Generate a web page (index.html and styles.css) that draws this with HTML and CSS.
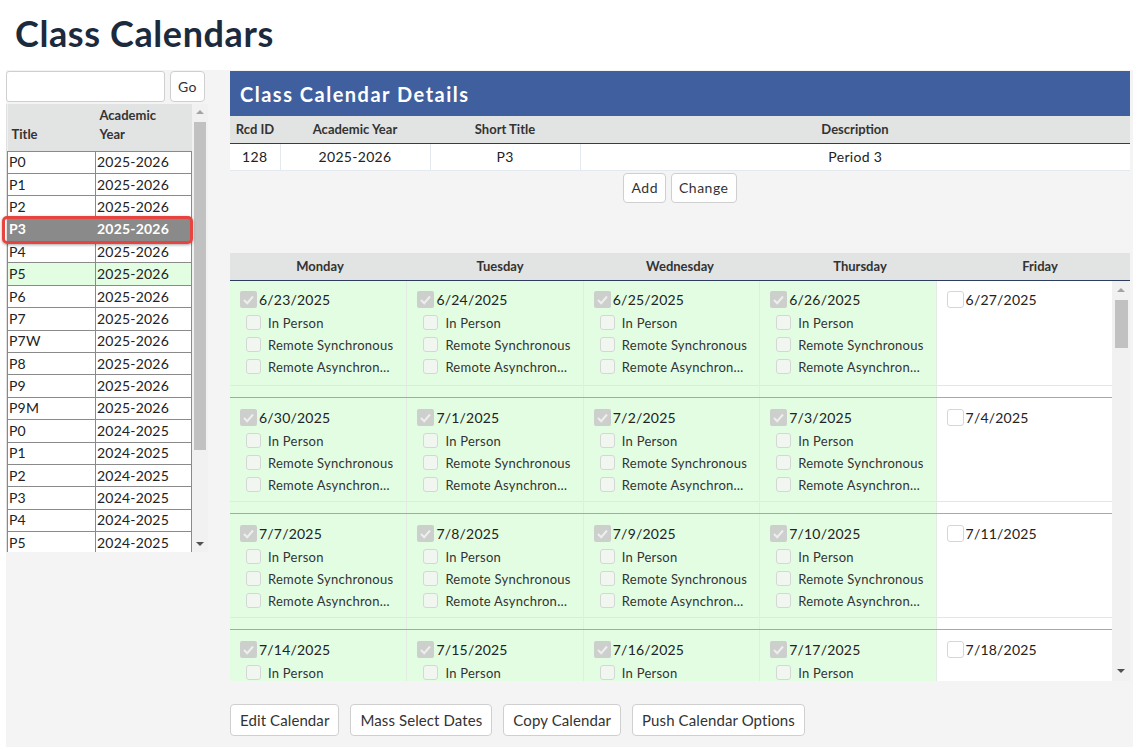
FILE: index.html
```html
<!DOCTYPE html>
<html>
<head>
<meta charset="utf-8">
<title>Class Calendars</title>
<link rel="stylesheet" href="styles.css">
</head>
<body>
<header class="page-head"><h1 class="title">Class Calendars</h1></header>
<main class="main">
  <aside class="side">
    <div class="search">
      <input class="search-input" type="text">
      <button class="btn go">Go</button>
    </div>
    <div class="list">
      <div class="list-scroll">
        <table class="list-table">
          <thead><tr><th class="c1">Title</th><th class="c2">Academic<br>Year</th></tr></thead>
          <tbody>
            <tr><td>P0</td><td>2025-2026</td></tr>
            <tr><td>P1</td><td>2025-2026</td></tr>
            <tr><td>P2</td><td>2025-2026</td></tr>
            <tr class="sel"><td>P3</td><td>2025-2026</td></tr>
            <tr><td>P4</td><td>2025-2026</td></tr>
            <tr class="hl"><td>P5</td><td>2025-2026</td></tr>
            <tr><td>P6</td><td>2025-2026</td></tr>
            <tr><td>P7</td><td>2025-2026</td></tr>
            <tr><td>P7W</td><td>2025-2026</td></tr>
            <tr><td>P8</td><td>2025-2026</td></tr>
            <tr><td>P9</td><td>2025-2026</td></tr>
            <tr><td>P9M</td><td>2025-2026</td></tr>
            <tr><td>P0</td><td>2024-2025</td></tr>
            <tr><td>P1</td><td>2024-2025</td></tr>
            <tr><td>P2</td><td>2024-2025</td></tr>
            <tr><td>P3</td><td>2024-2025</td></tr>
            <tr><td>P4</td><td>2024-2025</td></tr>
            <tr><td>P5</td><td>2024-2025</td></tr>
          </tbody>
        </table>
      </div>
      <div class="vscroll list-sb">
        <span class="sb-btn"><span class="tri up"></span></span>
        <span class="thumb"></span>
        <span class="sb-fill"></span>
        <span class="sb-btn"><span class="tri down"></span></span>
      </div>
    </div>
    <div class="annot"></div>
  </aside>

  <section class="detail">
    <div class="detail-head">Class Calendar Details</div>
    <table class="info">
      <thead>
        <tr><th class="w1">Rcd ID</th><th class="w2">Academic Year</th><th class="w3">Short Title</th><th>Description</th></tr>
      </thead>
      <tbody>
        <tr><td>128</td><td>2025-2026</td><td>P3</td><td>Period 3</td></tr>
      </tbody>
    </table>
    <div class="actions">
      <button class="btn">Add</button>
      <button class="btn">Change</button>
    </div>

    <div class="cal">
      <div class="cal-head">
        <div>Monday</div><div>Tuesday</div><div>Wednesday</div><div>Thursday</div><div>Friday</div>
      </div>
      <div class="cal-body">
        <div class="weeks">
          <div class="week first">
            <div class="day on"><div class="day-main"><div class="date"><span class="cb-dis"></span>6/23/2025</div><ul class="opts"><li><span class="cb"></span><span class="lbl">In Person</span></li><li><span class="cb"></span><span class="lbl">Remote Synchronous</span></li><li><span class="cb"></span><span class="lbl">Remote Asynchronous</span></li></ul></div><div class="day-foot"></div></div>
            <div class="day on"><div class="day-main"><div class="date"><span class="cb-dis"></span>6/24/2025</div><ul class="opts"><li><span class="cb"></span><span class="lbl">In Person</span></li><li><span class="cb"></span><span class="lbl">Remote Synchronous</span></li><li><span class="cb"></span><span class="lbl">Remote Asynchronous</span></li></ul></div><div class="day-foot"></div></div>
            <div class="day on"><div class="day-main"><div class="date"><span class="cb-dis"></span>6/25/2025</div><ul class="opts"><li><span class="cb"></span><span class="lbl">In Person</span></li><li><span class="cb"></span><span class="lbl">Remote Synchronous</span></li><li><span class="cb"></span><span class="lbl">Remote Asynchronous</span></li></ul></div><div class="day-foot"></div></div>
            <div class="day on"><div class="day-main"><div class="date"><span class="cb-dis"></span>6/26/2025</div><ul class="opts"><li><span class="cb"></span><span class="lbl">In Person</span></li><li><span class="cb"></span><span class="lbl">Remote Synchronous</span></li><li><span class="cb"></span><span class="lbl">Remote Asynchronous</span></li></ul></div><div class="day-foot"></div></div>
            <div class="day"><div class="day-main"><div class="date"><span class="cb-off"></span>6/27/2025</div></div><div class="day-foot"></div></div>
          </div>
          <div class="week">
            <div class="day on"><div class="day-main"><div class="date"><span class="cb-dis"></span>6/30/2025</div><ul class="opts"><li><span class="cb"></span><span class="lbl">In Person</span></li><li><span class="cb"></span><span class="lbl">Remote Synchronous</span></li><li><span class="cb"></span><span class="lbl">Remote Asynchronous</span></li></ul></div><div class="day-foot"></div></div>
            <div class="day on"><div class="day-main"><div class="date"><span class="cb-dis"></span>7/1/2025</div><ul class="opts"><li><span class="cb"></span><span class="lbl">In Person</span></li><li><span class="cb"></span><span class="lbl">Remote Synchronous</span></li><li><span class="cb"></span><span class="lbl">Remote Asynchronous</span></li></ul></div><div class="day-foot"></div></div>
            <div class="day on"><div class="day-main"><div class="date"><span class="cb-dis"></span>7/2/2025</div><ul class="opts"><li><span class="cb"></span><span class="lbl">In Person</span></li><li><span class="cb"></span><span class="lbl">Remote Synchronous</span></li><li><span class="cb"></span><span class="lbl">Remote Asynchronous</span></li></ul></div><div class="day-foot"></div></div>
            <div class="day on"><div class="day-main"><div class="date"><span class="cb-dis"></span>7/3/2025</div><ul class="opts"><li><span class="cb"></span><span class="lbl">In Person</span></li><li><span class="cb"></span><span class="lbl">Remote Synchronous</span></li><li><span class="cb"></span><span class="lbl">Remote Asynchronous</span></li></ul></div><div class="day-foot"></div></div>
            <div class="day"><div class="day-main"><div class="date"><span class="cb-off"></span>7/4/2025</div></div><div class="day-foot"></div></div>
          </div>
          <div class="week">
            <div class="day on"><div class="day-main"><div class="date"><span class="cb-dis"></span>7/7/2025</div><ul class="opts"><li><span class="cb"></span><span class="lbl">In Person</span></li><li><span class="cb"></span><span class="lbl">Remote Synchronous</span></li><li><span class="cb"></span><span class="lbl">Remote Asynchronous</span></li></ul></div><div class="day-foot"></div></div>
            <div class="day on"><div class="day-main"><div class="date"><span class="cb-dis"></span>7/8/2025</div><ul class="opts"><li><span class="cb"></span><span class="lbl">In Person</span></li><li><span class="cb"></span><span class="lbl">Remote Synchronous</span></li><li><span class="cb"></span><span class="lbl">Remote Asynchronous</span></li></ul></div><div class="day-foot"></div></div>
            <div class="day on"><div class="day-main"><div class="date"><span class="cb-dis"></span>7/9/2025</div><ul class="opts"><li><span class="cb"></span><span class="lbl">In Person</span></li><li><span class="cb"></span><span class="lbl">Remote Synchronous</span></li><li><span class="cb"></span><span class="lbl">Remote Asynchronous</span></li></ul></div><div class="day-foot"></div></div>
            <div class="day on"><div class="day-main"><div class="date"><span class="cb-dis"></span>7/10/2025</div><ul class="opts"><li><span class="cb"></span><span class="lbl">In Person</span></li><li><span class="cb"></span><span class="lbl">Remote Synchronous</span></li><li><span class="cb"></span><span class="lbl">Remote Asynchronous</span></li></ul></div><div class="day-foot"></div></div>
            <div class="day"><div class="day-main"><div class="date"><span class="cb-off"></span>7/11/2025</div></div><div class="day-foot"></div></div>
          </div>
          <div class="week last">
            <div class="day on"><div class="day-main"><div class="date"><span class="cb-dis"></span>7/14/2025</div><ul class="opts"><li><span class="cb"></span><span class="lbl">In Person</span></li></ul></div></div>
            <div class="day on"><div class="day-main"><div class="date"><span class="cb-dis"></span>7/15/2025</div><ul class="opts"><li><span class="cb"></span><span class="lbl">In Person</span></li></ul></div></div>
            <div class="day on"><div class="day-main"><div class="date"><span class="cb-dis"></span>7/16/2025</div><ul class="opts"><li><span class="cb"></span><span class="lbl">In Person</span></li></ul></div></div>
            <div class="day on"><div class="day-main"><div class="date"><span class="cb-dis"></span>7/17/2025</div><ul class="opts"><li><span class="cb"></span><span class="lbl">In Person</span></li></ul></div></div>
            <div class="day"><div class="day-main"><div class="date"><span class="cb-off"></span>7/18/2025</div></div></div>
          </div>
        </div>
        <div class="vscroll cal-sb">
          <span class="sb-btn big"><span class="tri up"></span></span>
          <span class="thumb"></span>
          <span class="sb-fill"></span>
          <span class="sb-btn big"><span class="tri down"></span></span>
        </div>
      </div>
    </div>

    <div class="bottom-actions">
      <button class="btn lg">Edit Calendar</button>
      <button class="btn lg">Mass Select Dates</button>
      <button class="btn lg">Copy Calendar</button>
      <button class="btn lg">Push Calendar Options</button>
    </div>
  </section>
</main>
</body>
</html>
```

FILE: styles.css
```css
* { box-sizing: border-box; }

html, body {
  margin: 0;
  padding: 0;
  background: #ffffff;
  font-family: "Lato", "Noto Sans", sans-serif;
  font-size: 14px;
  color: #222;
}

.page-head {
  height: 70px;
  padding: 12px 0 0 15px;
}

.title {
  margin: 0;
  font-size: 36px;
  font-weight: 700;
  letter-spacing: 0.6px;
  color: #1c2a3d;
  line-height: 42px;
}

.main {
  display: flex;
  gap: 22px;
  margin-left: 6px;
  background: #f4f4f4;
  height: 677px;
  padding-top: 1px;
}

/* ---------- left side ---------- */
.side {
  position: relative;
  width: 202px;
  flex: none;
}

.search {
  display: flex;
  gap: 5px;
  height: 31px;
}

.search-input {
  width: 159px;
  height: 31px;
  border: 1px solid #cfcfcf;
  border-radius: 3px;
  background: #fff;
  padding: 0 6px;
  font: inherit;
}

.btn {
  font-family: "Lato", "Noto Sans", sans-serif;
  font-size: 14px;
  letter-spacing: 0.5px;
  color: #333;
  background: #fff;
  border: 1px solid #cfcfcf;
  border-radius: 4px;
  padding: 0 7px;
  height: 30px;
  cursor: pointer;
}

.btn.go {
  width: 35px;
  height: 31px;
  padding: 0;
}

.list {
  margin-top: 2px;
  display: flex;
  height: 448px;
  background: #f0f0f0;
  border-left: 1px solid #e0e0e0;
}

.list-scroll {
  width: 185px;
  overflow: hidden;
  background: #f0f0f0;
}

.list-table {
  border-collapse: collapse;
  width: 185px;
  table-layout: fixed;
}

.list-table th {
  background: #e2e3e3;
  font-weight: 700;
  font-size: 13px;
  color: #333;
  text-align: left;
  vertical-align: bottom;
  height: 47px;
  padding: 0 4px 7px 4px;
  line-height: 19px;
}

.list-table th.c1 { width: 88px; }

.list-table tr { height: 22.4px; }

.list-table td {
  background: #fff;
  border: 1px solid #8a8a8a;
  padding: 0 1px;
  font-size: 14px;
  line-height: 20px;
  letter-spacing: 0.2px;
  color: #222;
  white-space: nowrap;
}

.list-table tr.sel td {
  background: #8a8a8a;
  color: #fff;
  font-weight: 700;
}

.list-table tr.hl td { background: #e3fde3; }

.vscroll {
  display: flex;
  flex-direction: column;
  align-items: center;
  background: #f1f1f1;
  flex: none;
}

.list-sb { width: 16px; }

.sb-btn {
  height: 16px;
  width: 100%;
  display: flex;
  align-items: center;
  justify-content: center;
  flex: none;
}

.sb-btn.big { height: 19px; }

.tri {
  width: 0;
  height: 0;
  border-left: 4px solid transparent;
  border-right: 4px solid transparent;
}

.tri.up { border-bottom: 4px solid #a3a3a3; }
.tri.down { border-top: 4px solid #505050; }

.list-sb .thumb {
  width: 12px;
  height: 328px;
  margin-top: 2px;
  background: #c1c1c1;
  flex: none;
}

.sb-fill { flex: 1; }

.annot {
  position: absolute;
  left: -4px;
  top: 145px;
  width: 191px;
  height: 28px;
  border: 3px solid #e8443f;
  border-radius: 5px;
  box-shadow: 0 1px 3px rgba(0, 0, 0, 0.35);
}

/* ---------- right detail ---------- */
.detail {
  width: 900px;
  flex: none;
}

.detail-head {
  height: 45px;
  background: #405f9f;
  color: #fff;
  font-size: 20px;
  font-weight: 700;
  letter-spacing: 1.5px;
  padding: 11px 0 0 10px;
}

.info {
  width: 900px;
  border-collapse: collapse;
  table-layout: fixed;
}

.info th {
  height: 27px;
  padding: 0;
  background: #e2e3e3;
  font-size: 13px;
  font-weight: 700;
  color: #333;
  text-align: center;
  border-bottom: 1px solid #2d3c5f;
}

.info th.w1 { width: 50px; }
.info th.w2 { width: 150px; }
.info th.w3 { width: 150px; }

.info td {
  height: 27px;
  padding: 0;
  background: #fff;
  text-align: center;
  font-size: 14px;
  letter-spacing: 0.3px;
  color: #222;
  border-right: 1px solid #e3e9ef;
  border-bottom: 1px solid #e3e9ef;
}

.info td:last-child { border-right: none; }

.actions {
  display: flex;
  justify-content: center;
  gap: 5px;
  margin-top: 2px;
  height: 30px;
}

/* ---------- calendar ---------- */
.cal { margin-top: 50px; }

.cal-head {
  display: grid;
  grid-template-columns: repeat(5, minmax(0, 1fr));
  height: 28px;
  background: #e2e3e3;
  border-bottom: 1px solid #2d3c5f;
}

.cal-head div {
  text-align: center;
  font-size: 13px;
  font-weight: 700;
  color: #333;
  line-height: 27px;
}

.cal-body {
  display: flex;
  height: 400px;
  overflow: hidden;
  background: #fff;
}

.weeks {
  width: 882px;
  flex: none;
}

.week {
  display: grid;
  grid-template-columns: repeat(5, minmax(0, 1fr));
  border-top: 1px solid #a8a8a8;
}

.week.first { border-top: none; }

.day {
  background: #fff;
  border-left: 1px solid #e4ebe4;
  min-width: 0;
}

.day:first-child { border-left: none; }

.day.on { background: #e3fde3; }

.day-main {
  height: 103px;
  padding: 10px 8px 0 10px;
}

.week.first .day-main {
  height: 104px;
  padding-top: 9px;
}

.week.last .day-main { height: 51px; }

.day-foot {
  height: 12px;
  border-top: 1px solid #e3e6e3;
}

.date {
  display: flex;
  align-items: center;
  height: 20px;
  font-size: 14px;
  color: #222;
  letter-spacing: 0.2px;
}

.cb-dis,
.cb-off {
  width: 17px;
  height: 17px;
  border-radius: 2px;
  margin-right: 2px;
  flex: none;
}

.cb-dis {
  background: #cdcfcd url("data:image/svg+xml;utf8,<svg xmlns='http://www.w3.org/2000/svg' width='17' height='17'><path d='M4 9l3.2 3.2L13 5.5' fill='none' stroke='%23eeeeee' stroke-width='2'/></svg>") no-repeat center;
}

.cb-off {
  background: #fff;
  border: 1px solid #d6d6d6;
  border-radius: 3px;
}

.opts {
  list-style: none;
  margin: 2px 0 0 0;
  padding: 0 0 0 6px;
}

.opts li {
  display: flex;
  align-items: center;
  height: 22px;
  min-width: 0;
}

.cb {
  width: 15px;
  height: 15px;
  border: 1px solid #d3d8d3;
  border-radius: 3px;
  background: #f1f6f1;
  flex: none;
  margin-right: 7px;
}

.lbl {
  font-size: 13px;
  letter-spacing: 0.25px;
  color: #333;
  white-space: nowrap;
  overflow: hidden;
  text-overflow: ellipsis;
  max-width: 128px;
  min-width: 0;
}

.cal-sb { width: 18px; }

.cal-sb .thumb {
  width: 13px;
  height: 48px;
  background: #c1c1c1;
  flex: none;
}

.bottom-actions {
  display: flex;
  gap: 11px;
  margin-top: 23px;
}

.btn.lg {
  height: 32px;
  font-size: 15px;
  letter-spacing: 0.1px;
  padding: 0 9px;
}
```
